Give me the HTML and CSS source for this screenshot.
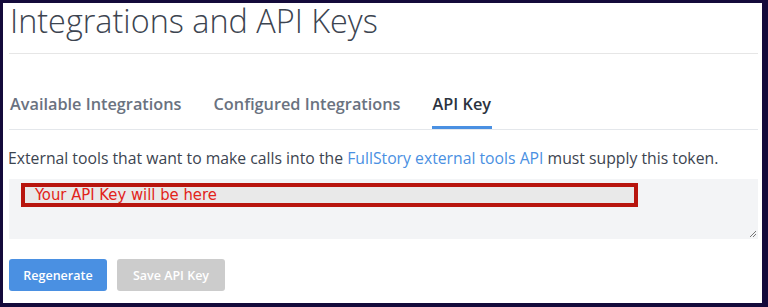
FILE: index.html
```html
<!DOCTYPE html>
<html>
<head>
<meta charset="utf-8">
<link rel="stylesheet" href="styles.css">
</head>
<body>
<div class="frame">
  <h1 class="title">Integrations and API Keys</h1>
  <nav class="tabs">
    <span class="tab">Available Integrations</span>
    <span class="tab">Configured Integrations</span>
    <span class="tab active">API Key</span>
  </nav>
  <p class="intro">External tools that want to make calls into the <a class="link" href="#">FullStory external tools API</a> must supply this token.</p>
  <div class="keyarea">
    <div class="keybox">Your API Key will be here</div>
    <svg class="grip" width="8" height="8" viewBox="0 0 8 8"><path d="M7 1 L1 7 M7 4 L4 7" stroke="#777" stroke-width="1"/></svg>
  </div>
  <div class="actions">
    <button class="btn primary">Regenerate</button>
    <button class="btn disabled">Save API Key</button>
  </div>
</div>
</body>
</html>
```
FILE: styles.css
```css
html, body {
  margin: 0;
  padding: 0;
  height: 100%;
}
body {
  background: #140a3b;
  font-family: "Open Sans", sans-serif;
  overflow: hidden;
}
.frame {
  display: flex;
  flex-direction: column;
  align-items: stretch;
  background: #ffffff;
  margin: 3px 6px 0 3px;
  height: 300px;
  padding: 0 4px 0 6px;
  box-sizing: border-box;
}
.title {
  margin: 0;
  font-weight: 300;
  font-size: 32.4px;
  line-height: 34px;
  padding-left: 1px;
  color: #3c4450;
  border-bottom: 1px solid #e6e6e6;
  height: 51px;
  box-sizing: border-box;
  flex: none;
}
.tabs {
  display: flex;
  gap: 30px;
  border-bottom: 1px solid #e4e7eb;
  margin-top: 38px;
  flex: none;
}
.tab {
  font-size: 16.3px;
  font-weight: 600;
  color: #6a7280;
  padding: 0 1px 10px 1px;
  line-height: 24px;
  border-bottom: 3px solid transparent;
}
.tab.active {
  color: #2b3340;
  border-bottom-color: #4a90e2;
}
.intro {
  margin: 17px 0 0 -1px;
  font-size: 15.75px;
  line-height: 22px;
  color: #3c4450;
  flex: none;
}
.link {
  color: #4a90e2;
  text-decoration: none;
}
.keyarea {
  position: relative;
  margin-top: 10px;
  background: #f3f4f6;
  height: 60px;
  padding: 4px 12px;
  box-sizing: border-box;
  flex: none;
}
.keybox {
  width: 617px;
  height: 24px;
  box-sizing: border-box;
  border: 4px solid #b8150e;
  background: #e9e9e9;
  color: #e2231a;
  font-family: "DejaVu Sans Condensed", "DejaVu Sans", sans-serif;
  font-stretch: condensed;
  font-size: 16.5px;
  line-height: 16px;
  padding-left: 10px;
}
.grip {
  position: absolute;
  right: 1px;
  bottom: 1px;
}
.actions {
  display: flex;
  gap: 10px;
  margin-top: 20px;
  flex: none;
}
.btn {
  border: none;
  border-radius: 3px;
  height: 32px;
  font-family: "Open Sans", sans-serif;
  font-size: 12.5px;
  font-weight: 600;
  color: #ffffff;
  padding: 0;
}
.btn.primary {
  background: #4a90e2;
  width: 98px;
}
.btn.disabled {
  background: #cccccc;
  width: 108px;
}
```
